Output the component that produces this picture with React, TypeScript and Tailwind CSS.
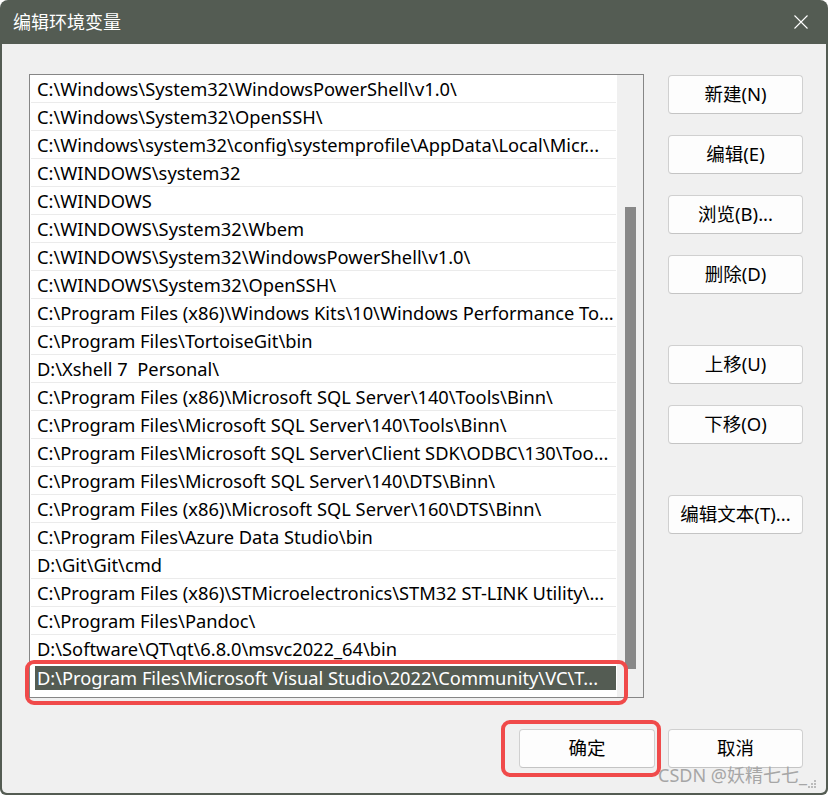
import React from "react";

const rows = [
  "C:\\Windows\\System32\\WindowsPowerShell\\v1.0\\",
  "C:\\Windows\\System32\\OpenSSH\\",
  "C:\\Windows\\system32\\config\\systemprofile\\AppData\\Local\\Micr...",
  "C:\\WINDOWS\\system32",
  "C:\\WINDOWS",
  "C:\\WINDOWS\\System32\\Wbem",
  "C:\\WINDOWS\\System32\\WindowsPowerShell\\v1.0\\",
  "C:\\WINDOWS\\System32\\OpenSSH\\",
  "C:\\Program Files (x86)\\Windows Kits\\10\\Windows Performance To...",
  "C:\\Program Files\\TortoiseGit\\bin",
  "D:\\Xshell 7  Personal\\",
  "C:\\Program Files (x86)\\Microsoft SQL Server\\140\\Tools\\Binn\\",
  "C:\\Program Files\\Microsoft SQL Server\\140\\Tools\\Binn\\",
  "C:\\Program Files\\Microsoft SQL Server\\Client SDK\\ODBC\\130\\Too...",
  "C:\\Program Files\\Microsoft SQL Server\\140\\DTS\\Binn\\",
  "C:\\Program Files (x86)\\Microsoft SQL Server\\160\\DTS\\Binn\\",
  "C:\\Program Files\\Azure Data Studio\\bin",
  "D:\\Git\\Git\\cmd",
  "C:\\Program Files (x86)\\STMicroelectronics\\STM32 ST-LINK Utility\\...",
  "C:\\Program Files\\Pandoc\\",
  "D:\\Software\\QT\\qt\\6.8.0\\msvc2022_64\\bin",
];
const selected = "D:\\Program Files\\Microsoft Visual Studio\\2022\\Community\\VC\\T...";

function Btn({ label, className = "" }: { label: string; className?: string }) {
  return (
    <div
      className={
        "h-[39px] w-[135px] rounded-[4px] border border-[#d0d0d0] border-b-[#c4c4c4] bg-[#fdfdfd] flex items-center justify-center text-[18.5px] text-black leading-none " +
        className
      }
    >
      {label}
    </div>
  );
}

export default function App() {
  return (
    <div
      className="relative w-[828px] h-[795px] bg-[#545c53] rounded-t-[8px] rounded-b-[6px] px-[2px] pb-[2px] flex flex-col overflow-hidden"
      style={{ fontFamily: '"Noto Sans", "Noto Sans CJK SC", sans-serif' }}
    >
      {/* title bar */}
      <div className="h-[44px] flex items-center justify-between shrink-0">
        <div className="pl-[11px] text-[18px] text-white leading-none">编辑环境变量</div>
        <div className="pr-[17px] flex items-center">
          <svg width="16" height="16" viewBox="0 0 16 16" className="block">
            <path d="M1.5 1.5 L14.5 14.5 M14.5 1.5 L1.5 14.5" stroke="#ffffff" strokeWidth="1.1" fill="none" />
          </svg>
        </div>
      </div>

      {/* body */}
      <div className="flex-1 bg-[#f0f0f0] rounded-b-[5px] flex flex-col pl-[27px] pr-[23px] pt-[30px]">
        <div className="flex gap-[24px]">
          {/* list */}
          <div className="w-[616px] h-[624px] border border-[#868686] bg-white flex">
            <div className="flex-1 min-w-0 flex flex-col text-[18.3px] text-black">
              {rows.map((r) => (
                <div
                  key={r}
                  className="h-[28px] mx-[1px] border-b border-[#ebebeb] flex items-center pl-[6px] pt-[1px] whitespace-pre overflow-hidden leading-none"
                >
                  {r}
                </div>
              ))}
              <div className="h-[28px] flex items-start pt-[3px] pl-[5px] pr-[1px]">
                <div className="h-[24px] w-full bg-[#545c53] text-white flex items-center pl-[2px] whitespace-pre overflow-hidden leading-none">
                  {selected}
                </div>
              </div>
            </div>
            <div className="w-[26px] bg-[#f0f0f0] flex flex-col items-center pt-[132px]">
              <div className="w-[11px] h-[462px] bg-[#888888]" />
            </div>
          </div>

          {/* buttons */}
          <div className="flex flex-col pt-[1px]">
            <Btn label="新建(N)" />
            <Btn label="编辑(E)" className="mt-[21px]" />
            <Btn label="浏览(B)..." className="mt-[21px]" />
            <Btn label="删除(D)" className="mt-[21px]" />
            <Btn label="上移(U)" className="mt-[51px]" />
            <Btn label="下移(O)" className="mt-[21px]" />
            <Btn label="编辑文本(T)..." className="mt-[51px]" />
          </div>
        </div>

        <div className="flex justify-end gap-[13px] mt-[31px]">
          <Btn label="确定" className="w-[136px]" />
          <Btn label="取消" />
        </div>
      </div>

      {/* annotations */}
      <div className="absolute left-[25px] top-[660px] w-[603px] h-[45px] border-[4px] border-[#f04a4a] rounded-[9px]" />
      <div className="absolute left-[501px] top-[720px] w-[160px] h-[57px] border-[4px] border-[#f04a4a] rounded-[9px]" />

      {/* watermark */}
      <div className="absolute left-[658px] top-[766px] text-[18px] leading-none text-[#a6a6a6] whitespace-nowrap">
        CSDN @妖精七七_
      </div>
      <div className="absolute left-[808px] top-[780px] grid grid-cols-3 gap-[1px]">
        <div className="w-[2px] h-[2px]" />
        <div className="w-[2px] h-[2px]" />
        <div className="w-[2px] h-[2px] bg-[#bbbbbb]" />
        <div className="w-[2px] h-[2px]" />
        <div className="w-[2px] h-[2px] bg-[#bbbbbb]" />
        <div className="w-[2px] h-[2px] bg-[#bbbbbb]" />
        <div className="w-[2px] h-[2px] bg-[#bbbbbb]" />
        <div className="w-[2px] h-[2px] bg-[#bbbbbb]" />
        <div className="w-[2px] h-[2px] bg-[#bbbbbb]" />
      </div>
    </div>
  );
}
